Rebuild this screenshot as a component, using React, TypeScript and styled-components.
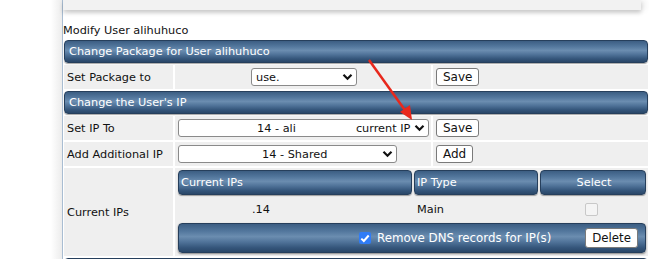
import React from 'react';
import styled, { createGlobalStyle } from 'styled-components';

const GlobalStyle = createGlobalStyle`
  html, body {
    margin: 0;
    padding: 0;
    background: #ffffff;
    overflow: hidden;
  }
  body {
    font-family: 'DejaVu Sans', Verdana, sans-serif;
    font-size: 11.3px;
    color: #111;
  }
`;

const blueBar = `
  color: #fff;
  border: 1px solid #263f5c;
  border-radius: 4px;
  background: linear-gradient(
    to bottom,
    #3c5e83 0%,
    #52769c 25%,
    #6b8db0 45%,
    #4f7298 65%,
    #34557a 85%,
    #2a4768 100%
  );
`;

const Page = styled.div`
  position: relative;
  width: 649px;
  height: 259px;
  overflow: hidden;
  display: flex;
  background: #fff;
`;

const Gutter = styled.div`
  width: 62px;
  flex: none;
  background: linear-gradient(to right, #ffffff 0%, #ffffff 82%, #ececec 100%);
`;

const Panel = styled.div`
  flex: 1;
  border-left: 1px solid #a9bdd2;
  display: flex;
  flex-direction: column;
  min-width: 0;
  > * {
    flex: none;
  }
`;

const TopBox = styled.div`
  height: 10px;
  margin-right: 8px;
  background: #f2f2f2;
  box-shadow: 0 3px 4px rgba(0, 0, 0, 0.18), 4px 0 6px rgba(0, 0, 0, 0.08);
`;

const Title = styled.div`
  margin-top: 13px;
  height: 15px;
  line-height: 15px;
`;

const Grid = styled.div`
  display: grid;
  grid-template-columns: 109px 256px 1fr;
  gap: 2px;
  padding: 2px 0 0 1px;
  width: 584px;
`;

const Header = styled.div`
  ${blueBar}
  grid-column: 1 / -1;
  height: 21px;
  line-height: 21px;
  padding-left: 4px;
  box-shadow: 0 1px 1px rgba(0, 0, 0, 0.35);
`;

const Cell = styled.div<{ $h: number; $span?: number }>`
  background: #efefef;
  height: ${(p) => p.$h}px;
  display: flex;
  align-items: center;
  padding: 0 2px 0 3px;
  grid-column: ${(p) => (p.$span ? `span ${p.$span}` : 'auto')};
  min-width: 0;
`;

const TopCell = styled(Cell)`
  align-items: flex-start;
`;

const SelectBox = styled.div<{ $w: number; $offset: number }>`
  width: ${(p) => p.$w}px;
  margin-left: ${(p) => p.$offset}px;
  height: 18px;
  box-sizing: border-box;
  border: 1px solid #8a8a8a;
  border-radius: 3px;
  background: #fff;
  display: flex;
  align-items: center;
  padding: 0 3px 0 4px;
  white-space: pre;
`;

const SelectText = styled.span<{ $grow?: boolean; $pad?: number }>`
  flex: ${(p) => (p.$grow ? 1 : 'none')};
  text-align: left;
  padding-left: ${(p) => p.$pad ?? 0}px;
`;

const Chevron = () => (
  <svg width="11" height="8" viewBox="0 0 11 8" style={{ flex: 'none' }}>
    <path d="M1.5 1.8 L5.5 5.8 L9.5 1.8" fill="none" stroke="#111" strokeWidth="2.2" />
  </svg>
);

const Button = styled.button`
  font-family: 'DejaVu Sans', Verdana, sans-serif;
  font-size: 12px;
  height: 18px;
  padding: 0 6px;
  background: #fff;
  color: #111;
  border: 1px solid #7a7a7a;
  border-radius: 3px;
  line-height: 16px;
`;

const Nested = styled.div`
  display: grid;
  grid-template-columns: 234px 124px 1fr;
  gap: 2px;
  padding-top: 2px;
  width: 100%;
`;

const NestedHead = styled.div<{ $center?: boolean }>`
  ${blueBar}
  height: 23px;
  line-height: 23px;
  padding-left: 2px;
  text-align: ${(p) => (p.$center ? 'center' : 'left')};
  box-shadow: 0 1px 1px rgba(0, 0, 0, 0.35);
`;

const NestedCell = styled.div<{ $center?: boolean; $pad?: number }>`
  height: 24px;
  background: #efefef;
  display: flex;
  align-items: center;
  justify-content: ${(p) => (p.$center ? 'center' : 'flex-start')};
  padding-left: ${(p) => p.$pad ?? 3}px;
`;

const Footer = styled.div`
  ${blueBar}
  grid-column: 1 / -1;
  height: 28px;
  display: flex;
  align-items: center;
  justify-content: flex-end;
  gap: 7px;
  padding-right: 7px;
  box-shadow: 0 1px 2px rgba(0, 0, 0, 0.45);
`;

const CheckLabel = styled.label`
  display: flex;
  align-items: center;
  gap: 6px;
  margin-right: 27px;
  font-size: 11.8px;
`;

const BlueCheck = styled.span`
  width: 12px;
  height: 12px;
  border-radius: 2px;
  background: #2f7cf6;
  display: inline-flex;
  align-items: center;
  justify-content: center;
`;

const GrayCheck = styled.span`
  width: 11px;
  height: 11px;
  margin-right: 6px;
  border: 1px solid #c8c8c8;
  border-radius: 2px;
  background: #f4f4f4;
`;

const DeleteButton = styled(Button)`
  height: 20px;
  font-size: 11.8px;
  padding: 0 6px;
`;

const Arrow = styled.svg`
  position: absolute;
  left: 364px;
  top: 57px;
  pointer-events: none;
`;

export default function App() {
  return (
    <>
      <GlobalStyle />
      <Page>
        <Gutter />
        <Panel>
          <TopBox />
          <Title>Modify User alihuhuco</Title>
          <Grid>
            <Header>Change Package for User alihuhuco</Header>
            <Cell $h={24}>Set Package to</Cell>
            <Cell $h={24}>
              <SelectBox $w={106} $offset={73}>
                <SelectText $grow>use.</SelectText>
                <Chevron />
              </SelectBox>
            </Cell>
            <Cell $h={24}>
              <Button>Save</Button>
            </Cell>

            <Header>Change the User's IP</Header>
            <Cell $h={24}>Set IP To</Cell>
            <Cell $h={24}>
              <SelectBox $w={252} $offset={0}>
                <SelectText $grow $pad={74}>14 - ali</SelectText>
                <SelectText>current IP </SelectText>
                <Chevron />
              </SelectBox>
            </Cell>
            <Cell $h={24}>
              <Button>Save</Button>
            </Cell>

            <Cell $h={24}>Add Additional IP</Cell>
            <Cell $h={24}>
              <SelectBox $w={219} $offset={0}>
                <SelectText $grow $pad={79}>14 - Shared</SelectText>
                <Chevron />
              </SelectBox>
            </Cell>
            <Cell $h={24}>
              <Button>Add</Button>
            </Cell>

            <Cell $h={88}>Current IPs</Cell>
            <TopCell $h={88} $span={2}>
              <Nested>
                <NestedHead>Current IPs</NestedHead>
                <NestedHead>IP Type</NestedHead>
                <NestedHead $center>Select</NestedHead>
                <NestedCell $pad={74}>.14</NestedCell>
                <NestedCell>Main</NestedCell>
                <NestedCell $center>
                  <GrayCheck />
                </NestedCell>
                <Footer>
                  <CheckLabel>
                    <BlueCheck>
                      <svg width="10" height="9" viewBox="0 0 10 9">
                        <path d="M1.3 4.6 L3.8 7 L8.7 1.5" fill="none" stroke="#fff" strokeWidth="2" />
                      </svg>
                    </BlueCheck>
                    Remove DNS records for IP(s)
                  </CheckLabel>
                  <DeleteButton>Delete</DeleteButton>
                </Footer>
              </Nested>
            </TopCell>
            <Header />
          </Grid>
        </Panel>
        <Arrow width="60" height="70" viewBox="0 0 60 70">
          <path d="M5 3 L43 56" stroke="#e8281c" strokeWidth="2.5" fill="none" />
          <path d="M48 63 L36 55 L46 48 Z" fill="#e8281c" />
        </Arrow>
      </Page>
    </>
  );
}
